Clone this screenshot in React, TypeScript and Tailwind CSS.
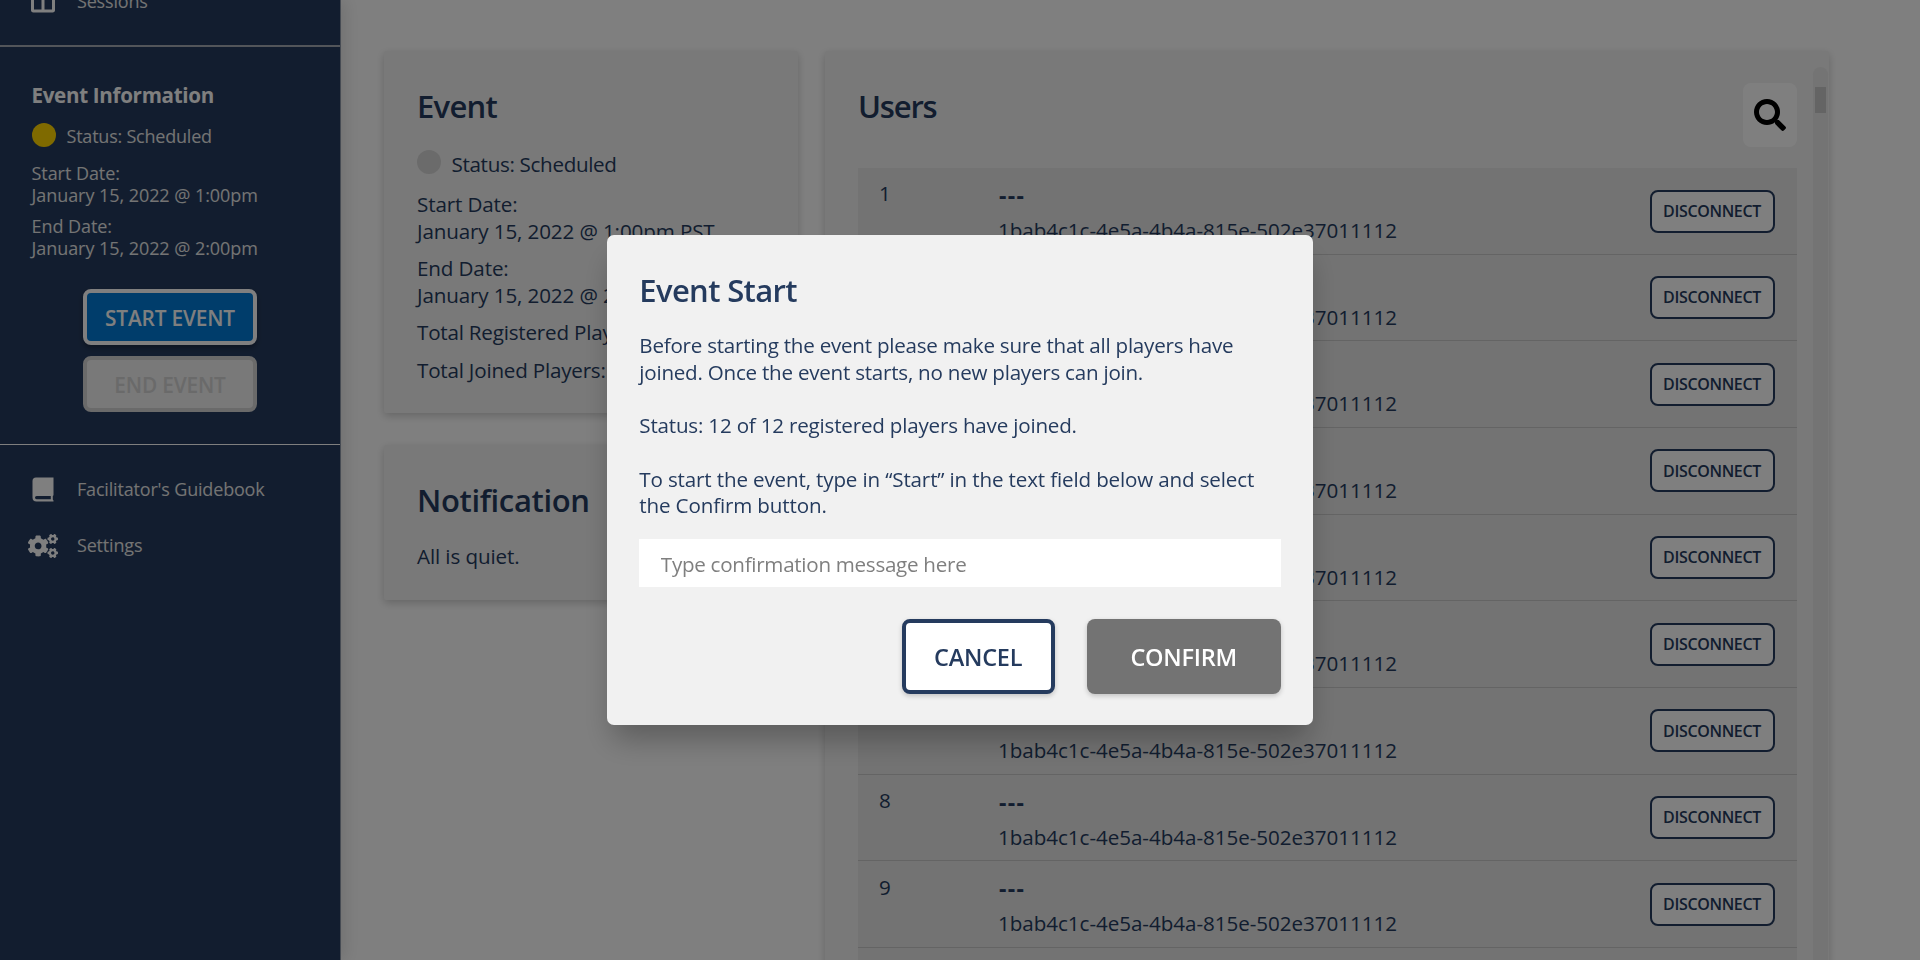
import React from 'react';
import { FaCogs, FaColumns, FaSearch } from 'react-icons/fa';

const USER_ID = '1bab4c1c-4e5a-4b4a-815e-502e37011112';
const users = Array.from({ length: 10 }, (_, i) => ({ index: i + 1, name: '---', id: USER_ID }));

function BookIcon() {
  return (
    <svg width="22" height="25" viewBox="0 0 22 25" fill="currentColor">
      <path
        fillRule="evenodd"
        d="M4 0.5H21.5V18.2L20.8 19V22.6L21.5 23.4V24.5H4.5A4 4 0 0 1 0.5 20.5V4A3.5 3.5 0 0 1 4 0.5ZM4.6 19A1.5 1.5 0 0 0 4.6 22.2H18.8V19Z"
      />
    </svg>
  );
}

interface NavItemProps {
  icon: React.ReactNode;
  label: string;
}

function NavItem({ icon, label }: NavItemProps) {
  return (
    <a className="flex h-[56.5px] shrink-0 items-center pl-[25px]">
      <span className="flex w-9 justify-center">{icon}</span>
      <span className="ml-4 text-[18px] tracking-[-0.18px] text-[#e8e8e8]">{label}</span>
    </a>
  );
}

function Sidebar() {
  return (
    <aside className="z-10 flex w-[341px] shrink-0 flex-col border-r border-[#8f98a8] bg-[#253b5e] text-white shadow-[4px_0_16px_rgba(0,0,0,0.12)]">
      <div className="-mt-[26.5px] h-[71.5px]">
        <NavItem icon={<FaColumns size={24} />} label="Sessions" />
      </div>

      {/* Event summary */}
      <div className="h-[399px] border-t-2 border-[#a4abb5] pt-[35px]">
        <div className="px-[31.5px] text-[18px] leading-[21.33px] tracking-[-0.06px] text-[#e8e8e8]">
          <h3 className="text-[20.6px] leading-[26.67px] font-bold tracking-[-0.32px] text-white">Event Information</h3>
          <div className="mt-[14.5px] flex h-6 items-center">
            <span className="h-6 w-6 rounded-full bg-[#ffd400]" />
            <span className="ml-[11px] pt-[3px] tracking-[-0.22px]">Status: Scheduled</span>
          </div>
          <p className="mt-4">
            Start Date:
            <br />
            January 15, 2022 @ 1:00pm
          </p>
          <p className="mt-[10.67px]">
            End Date:
            <br />
            January 15, 2022 @ 2:00pm
          </p>
        </div>
        <div className="mt-[29.5px] flex flex-col items-center gap-[11px] text-[20.8px] font-semibold tracking-[-0.15px]">
          <button className="h-14 w-[174px] rounded-lg border-4 border-white bg-[#007ad6] pt-[3px] whitespace-nowrap shadow-[0_3px_5px_rgba(0,0,0,0.3)]">
            START EVENT
          </button>
          <button className="h-14 w-[174px] rounded-lg border-4 border-[#d4d4d4] bg-[#f2f2f2] pt-[3px] text-[#d4d4d4]">END EVENT</button>
        </div>
      </div>

      <nav className="border-t border-white pt-4">
        <NavItem icon={<BookIcon />} label="Facilitator's Guidebook" />
        <NavItem icon={<FaCogs size={30} />} label="Settings" />
      </nav>
    </aside>
  );
}

function EventCard() {
  return (
    <section className="h-[362.5px] rounded-xs bg-[#f2f2f2] pt-8 pl-[33px] shadow-[0_3px_8px_rgba(0,0,0,0.2)]">
      <h2 className="text-[31px] leading-[46px] font-semibold tracking-[-0.7px]">Event</h2>
      <div className="mt-[22px] flex items-center">
        <span className="-mt-1 h-6 w-6 rounded-full bg-[#d6d6d6]" />
        <span className="ml-[10.5px] tracking-[-0.32px]">Status: Scheduled</span>
      </div>
      <p className="mt-[14px] tracking-[-0.12px]">
        Start Date:
        <br />
        January 15, 2022 @ 1:00pm PST
      </p>
      <p className="mt-[10.67px] tracking-[-0.12px]">
        End Date:
        <br />
        January 15, 2022 @ 2:00pm PST
      </p>
      <p className="mt-[10.67px]">Total Registered Players: 12</p>
      <p className="mt-[10.67px]">Total Joined Players: 12</p>
    </section>
  );
}

function NotificationCard() {
  return (
    <section className="h-[155px] rounded-xs bg-[#f2f2f2] pt-8 pl-[33px] shadow-[0_3px_8px_rgba(0,0,0,0.2)]">
      <h2 className="text-[31px] leading-[46px] font-semibold tracking-[-0.35px]">Notification</h2>
      <p className="mt-5 tracking-[-0.1px]">All is quiet.</p>
    </section>
  );
}

function UsersCard() {
  return (
    <section className="flex h-[960px] w-[1004px] rounded-xs bg-[#f2f2f2] pl-[33px] shadow-[0_3px_8px_rgba(0,0,0,0.2)]">
      <div className="w-[939px] pt-8">
        <div className="flex h-[85.5px] items-start justify-between">
          <h2 className="text-[31px] leading-[46px] font-semibold tracking-[-1.2px]">Users</h2>
          <button className="flex h-16 w-[54px] items-center justify-center rounded-lg bg-white text-black">
            <FaSearch size={32} />
          </button>
        </div>
        <ul className="bg-[#e6e6e6]">
          {users.map((user) => (
            <li key={user.index} className="flex h-[86.67px] border-b-[1.5px] border-[#c8c8c8] pr-[22.5px] pl-[21px]">
              <span className="w-[119px] pt-[12.4px]">{user.index}</span>
              <div className="flex-1 pt-[14px]">
                <p className="pl-px text-[23px] font-bold tracking-[1.4px]">{user.name}</p>
                <p className="mt-[8.5px] tracking-[-0.04px]">{user.id}</p>
              </div>
              <button className="mt-[21.5px] h-[43px] w-[125px] rounded-lg border-[2.67px] border-[#253b5e] bg-white text-[16px] font-semibold tracking-[-0.35px]">
                DISCONNECT
              </button>
            </li>
          ))}
        </ul>
      </div>
      {/* Scroll track */}
      <div className="mt-4 ml-4 flex w-[15px] flex-col items-center rounded-t-lg bg-[#e8e8e8]">
        <span className="mt-5 h-[26px] w-[11px] bg-[#c8c8c8]" />
      </div>
    </section>
  );
}

function StartEventModal() {
  return (
    <div className="fixed inset-0 z-20 flex items-center justify-center bg-black/50">
      <div className="h-[490.67px] w-[705.33px] rounded-[7px] bg-[#f1f1f1] p-8 shadow-[0_20px_30px_-6px_rgba(0,0,0,0.28)]">
        <h2 className="pt-px text-[31px] leading-[45px] font-semibold tracking-[-0.65px]">Event Start</h2>
        <p className="mt-[19.5px] tracking-[-0.24px]">
          Before starting the event please make sure that all players have
          <br />
          joined. Once the event starts, no new players can join.
        </p>
        <p className="mt-[26.67px]">Status: 12 of 12 registered players have joined.</p>
        <p className="mt-[26.67px] tracking-[-0.15px]">
          To start the event, type in “Start” in the text field below and select
          <br />
          the Confirm button.
        </p>
        <input
          className="mt-5 block h-12 w-full bg-white px-[21.5px] pt-[3px] tracking-[-0.28px] placeholder:text-[#7f7f7f]"
          placeholder="Type confirmation message here"
        />
        <div className="mt-8 flex justify-end gap-8 text-[23.5px] font-semibold tracking-[-0.25px]">
          <button className="h-[74.67px] w-[153px] rounded-lg border-4 border-[#253b5e] bg-white pt-0.5 shadow-[0_2px_5px_rgba(0,0,0,0.2)]">
            CANCEL
          </button>
          <button className="h-[74.67px] w-[194px] rounded-lg bg-[#737373] pt-0.5 text-white shadow-[0_2px_5px_rgba(0,0,0,0.2)]">CONFIRM</button>
        </div>
      </div>
    </div>
  );
}

export default function App() {
  return (
    <div className="flex h-[960px] w-[1920px] overflow-hidden bg-white font-['Open_Sans',sans-serif] text-[20.6px] leading-[26.67px] tracking-[-0.2px] text-[#253b5e]">
      <Sidebar />
      <main className="flex flex-1 gap-[27px] pt-[50.5px] pl-[43px]">
        <div className="flex w-[414px] flex-col gap-8">
          <EventCard />
          <NotificationCard />
        </div>
        <UsersCard />
      </main>
      <StartEventModal />
    </div>
  );
}
